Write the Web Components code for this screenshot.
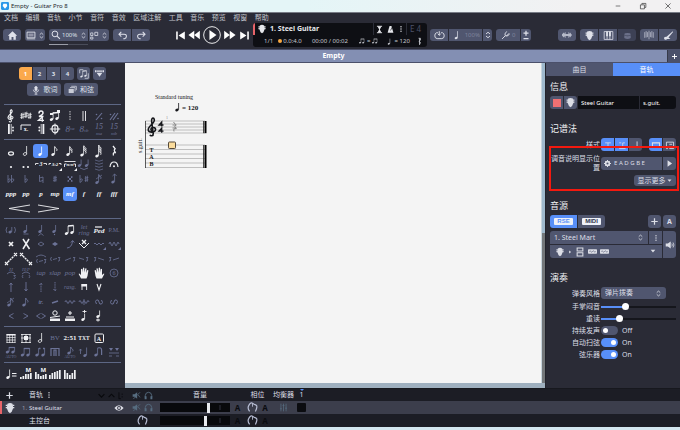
<!DOCTYPE html>
<html lang="zh-CN">
<head>
<meta charset="utf-8">
<title>Empty - Guitar Pro 8</title>
<style>
html,body{margin:0;height:100%}
body{font:6px/8px "Noto Sans","Noto Sans CJK SC",sans-serif;color:#dcdee6;background:#d3e6ef;
--bg:#2a2b36;--btn:#50566f;--blue:#588ff8;--dim:#6c7397;--line:#5d6785;--black:#0e0f14}
</style>
</head>
<body>
<gp-app></gp-app>
<script>
const head=(x,y,o)=>`<ellipse cx="${x}" cy="${y}" rx="1.8" ry="1.3" transform="rotate(-22 ${x} ${y})" ${o?'fill="none" stroke="currentColor" stroke-width=".8"':''}/>`;
const S=(d,w=1,x='')=>`<path d="${d}" fill="none" stroke="currentColor" stroke-width="${w}" ${x}/>`;
const F=d=>`<path d="${d}"/>`;
const T=(t,s=5,st='',y=9)=>`<text x="7" y="${y}" text-anchor="middle" font-family="Liberation Serif,serif" font-size="${s}" ${st}>${t}</text>`;
const IT='font-style="italic"',BI='font-style="italic" font-weight="bold"',B='font-weight="bold"';
const note=(x=6,y=10,h=7,o=0)=>head(x,y,o)+S(`M${x+1.6} ${y-.4}V${y-h}`,.8);
const flag=(x,y)=>S(`M${x} ${y}q.3 1.600 1.700 2.200q1 1 .2 2.200`,.9);
const beam=(y=3)=>note(3.500,10.500,7.500)+note(9,9.500,7)+S(`M5 ${y}L10.600 ${y-.5}`,1.6);
const wave=(y=7,a=1.500)=>S(`M2 ${y}q1-${a*2} 2 0t2 0t2 0t2 0t2 0`,.9);
const clef=S('M5.200 12.200c.3 1.200 2.400 1 2.200-.8L6.300 3C6.100 1 7 .5 7.600.8c.9.9.4 2.600-.8 3.900C5 6.200 3.800 7.300 4 9c.3 1.900 4.700 2 5-.2.2-1.900-3-2.200-3.200-.4 0 .7.3 1 .8 1.200',1.1);
const sharp=(x,y=7)=>S(`M${x-.8} ${y-3}v6M${x+.8} ${y-3.300}v6M${x-1.800} ${y-.8}l3.600-.7M${x-1.800} ${y+1.500}l3.600-.7`,.8);
const flat=x=>S(`M${x} 3v7.500q3-1.800 2.300-3.200q-1-1-2.300.4`,.8);
const bars=(hs)=>hs.map((h,i)=>`<rect x="${1+i*2.500}" y="${12-h}" width="1.700" height="${h}"/>`).join('');
const two='<path d="M5 4.500q0-2.500 2-2.500t2 2q0 1.500-4 3.500h4.500" fill="none" stroke="currentColor" stroke-width="1.500"/>';
const four='<path d="M8.300 12.800V8L4.500 11.300h5.500" fill="none" stroke="currentColor" stroke-width="1.300"/>';
const hand=F('M4 12.500L1.800 8.300q-.3-1 .8-.6L4 9V3.300q.7-.9 1.300 0V6.500L6 2q.7-.8 1.300 0v4.500L8.300 2.500q.7-.7 1.200 0L9.200 7l1-2.800q.8-.6 1.200.2L10.500 10l-1 2.500z');
const ICONS={
 clef,
 keysig:sharp(3.200)+sharp(7,6)+sharp(10.800,7),
 timesig:two+four,
 triplet:beam(4)+F('M9 1h3v3h-3zM2 4h3v2h-3z'),
 dashed:S('M7 2v10',.8,'stroke-dasharray="1.500 1"'),
 dbl:S('M6 2v10M8.500 2v10',.9),
 sim1:S('M4 11L10 4',1.1)+'<circle cx="4.500" cy="5.500" r=".8"/><circle cx="9.500" cy="9.500" r=".8"/>',
 sim2:S('M3 11L8 4M6 11l5-7',1.1)+'<circle cx="3.500" cy="5.500" r=".8"/><circle cx="11" cy="9.500" r=".8"/>',
 repL:F('M4 2h1.800v10H4z')+S('M7.200 2v10',.8)+'<circle cx="9" cy="5.500" r=".9"/><circle cx="9" cy="8.500" r=".9"/>',
 repR:F('M8.500 2h1.800v10H8.500z')+S('M7.200 2v10',.8)+'<circle cx="5.300" cy="5.500" r=".9"/><circle cx="5.300" cy="8.500" r=".9"/>',
 ending:S('M2 8V3h10')+T('x.',6,B,9),
 coda:'<ellipse cx="7" cy="7" rx="3" ry="3.800" fill="none" stroke="currentColor" stroke-width="1.300"/>'+S('M7 1.500v11M1.800 7h10.400'),
 o8va:T('8<tspan font-size="5" dy="-2">va</tspan>',9,IT,10),o8vb:T('8<tspan font-size="5">vb</tspan>',9,IT,10),
 o15a:T('15<tspan font-size="5" x="7" dy="6">ma</tspan>',8,IT,7),o15b:T('15<tspan font-size="5" x="7" dy="6">mb</tspan>',8,IT,7),
 whole:'<ellipse cx="7" cy="9.500" rx="2.500" ry="1.600" fill="none" stroke="currentColor" stroke-width="1.200"/>',
 half:note(6,10,8,1),quarter:note(6,10.500,8),eighth:note(5,10.500,8)+flag(6.800,2.500),
 sixteenth:note(5,10.500,8)+flag(6.800,2.500)+flag(6.800,4.500),
 n32:note(5,11,9)+flag(6.800,1.500)+flag(6.800,3.300)+flag(6.800,5.100),
 n64:note(5,12,11)+flag(6.800,1)+flag(6.800,2.800)+flag(6.800,4.600)+flag(6.800,6.400),
 rest:S('M6 2l2.200 2.800q-2 1.500.5 4q-3.200-1-2.200 2.700',1.300),
 dot:'<circle cx="7" cy="9" r="1.100"/>',ddot:'<circle cx="4.500" cy="9" r="1.100"/><circle cx="9" cy="9" r="1.100"/>',
 trip3:S('M1.500 7V5.500h3M9.500 5.500h3V7',.9)+T('3',6,BI,8),
 tripn:S('M1 7V5.500h2M11 5.500h2V7',.9)+T('3:2',5,BI,8)+F('M11 13h3v-3z'),
 tripb:S('M1.500 3.500h11M1.500 9V6h2M10.500 6h2v3',.9)+T('n:n',5,BI,8)+F('M11 13h3v-3z'),
 tie:note(2.500,7.500,6)+note(9.500,7.500,6)+S('M3 10q4 3 8 0',.8),
 ties:S('M3 2q4 2.500 8 0M3 5q4 2.500 8 0M3 8q4 2.500 8 0M3 11q4 2.500 8 0',.7),
 fermata:S('M3 9q.5-5 4-5t4 5',1.100)+'<circle cx="7" cy="8.300" r="1"/>',
 bb:flat(4)+flat(7.500),b:flat(6),nat:S('M5.500 3v6.500l3.500-1M9 11V5L5.500 6',.8),sh:sharp(7),
 dsh:S('M5 5l4 4M9 5l-4 4')+S('M4.500 5h1.500M8 5h1.500M4.500 9h1.500M8 9h1.500',1.4),bsh:flat(3)+sharp(9.500),
 grace:note(5,10.500,8)+flag(6.800,2.500)+S('M4 7L10 3',.7),up:note(6,10,8)+S('M5.500 4L7.600 2l2 2',.8),
 ppp:T('ppp',7,BI),pp:T('pp',7,BI),p:T('p',7,BI),mp:T('mp',7,BI),mf:T('mf',7,BI),f:T('f',7,BI),ff:T('ff',7,BI),fff:T('fff',7,BI),
 cresc:S('M25 4L4 7.500L25 11',.9),decresc:S('M4 4L25 7.500L4 11',.9),
 ghost:S('M3 4q-2 3 0 6M10.500 4q2 3 0 6',.8)+note(6.200,9,5),
 acc:note(6,8.500,6.500)+S('M4.500 11h5',.8),acc2:note(6,8.500,6.500)+S('M4.500 12.500l2.500-2l2.500 2',.8),stac:note(6,8.500,6.500)+'<circle cx="6.500" cy="11.500" r=".7"/>',
 graceb:beam(3),letring:T('let<tspan x="7" dy="6">ring</tspan>',6.500,IT,6),ped:T('Ped',7,BI,10)+S('M3 4h7',1.2),pm:T('P.M.',6),
 x1:S('M5 5l4 4M9 5l-4 4',1.700),x2:S('M4 2l6.500 10M10 2L4 12',1.500),
 dia:S('M4 7l3-2l3 2l-3 2z',.8),diaf:F('M4 7l3-2l3 2l-3 2z'),bend:S('M4 11q5-.5 5.500-7M7.800 5.500L9.600 3.500l1.700 2',.9),
 trem:S('M2 6l5 5l5-5')+S('M5 3l4 4M9 3L5 7',1.3),vib:wave(7,1)+F('M11 13h3v-3z'),vibw:wave(7,2)+F('M11 13h3v-3z'),
 sl1:S('M4 10L10 4',1.500,'stroke-dasharray="2 .7"')+S('M1 10l3 3M4 10l-3 3M10 1l3 3M13 1l-3 3',1.1),sl2:S('M4 4L10 10',1.500,'stroke-dasharray="2 .7"')+S('M1 1l3 3M4 1L1 4M10 10l3 3M13 10l-3 3',1.1),
 ham:S('M2 5q5-4 10 0M3.500 7q-2 2 0 4M5 9.500l4-1M10 7.500h2L11 9q1.500 1 0 2h-1',.8),s1:S('M3.500 5q-2 2 0 4M5 7.500l4-1M10 5.500h2L11 7q1.500 1 0 2h-1',.8),s2:S('M2 8.500L8 6M10 5.500h2L11 7q1.500 1 0 2h-1',.8),s3:S('M2 6l5 1.500M9 5.500h2L10 7q1.500 1 0 2h-1',.8),s4:S('M2 5.500h2L3 7q1.500 1 0 2H2M6 6l6 2',.8),s5:S('M2 5.500h2L3 7q1.500 1 0 2H2M6 8l6-2',.8),
 hp:T('H',5,IT,5)+S('M3 8q4-4 8 0M9.500 9.500h2l-1 1.200q1.500 1 0 2h-1',.8),hpp:T('H/P',5,IT,5)+S('M3 8q4-4 8 0M4 12q-1.500-1.500 0-3M10 12q1.500-1.500 0-3',.8),
 tap:T('tap',7,IT),slap:T('slap',7,IT),pop:T('pop',7,IT),hand,hand2:`<g transform="matrix(-1 0 0 1 14 0)">${hand}</g>`,
 six:'<circle cx="7" cy="7" r="4" fill="none" stroke="currentColor" stroke-width=".8"/>'+T('6',6),
 au:S('M7 12V3M5.500 5L7 3l1.500 2',.9),ad:S('M7 2v9M5.500 9L7 11l1.500-2',.9),dau:S('M7 12V3M5.500 5L7 3l1.500 2',.9,'stroke-dasharray="1.500 .7"'),dad:S('M7 2v9M5.500 9L7 11l1.500-2',.9,'stroke-dasharray="1.500 .7"'),
 rasg:T('rasg.',6,IT),down:F('M4.500 4h5.500v2.500h-5.500z')+S('M5 10V4M9.600 10V4',.9),vup:S('M5 4l2 6l2-6',1.100),
 g1:note(5,10,7)+flag(6.800,3)+S('M3 8l7-5',.7),g2:note(5,10,7)+flag(6.800,3),tr:T('tr.',6,BI),pick:S('M4 8l6-2',1.500),
 mord:wave(7,1.600),mord2:wave(7,1.600)+S('M7 4v6',.8),turn:S('M4.500 9q-2-3 0-4t2.500 2t2.500 2t0-4',1),turn2:S('M4.500 5q-2 3 0 4t2.500-2t2.500-2t0 4',1),
 lt:S('M9.500 4.500L5 7l4.500 2.500',.9),gt:S('M4.500 4.500L9 7l-4.500 2.500',.9),ltgt:S('M6.500 4.500L2.500 7l4 2.500M7.500 4.500L11.500 7l-4 2.500',.9),
 wopen:'<circle cx="7" cy="4" r="2.200" fill="none" stroke="currentColor"/>'+S('M2 8.500L12 7',1)+F('M2 9.500h10V12H2z'),
 wclose:S('M7 2v4M5 4h4M3 8h8',1.1)+F('M2 9.500h10V12H2z'),
 nq1:note(6,10.500,6)+S('M5.500 2.500h4M7.500 1v3',.9),nq2:note(6,7.500,6)+S('M4 11h4M6 9.500v3',1),
 chords:F('M2.500 3h9v1.500h-9z')+S('M3 3v9M5.700 3v9M8.400 3v9M11 3v9M2.500 6.500h9M2.500 9h9M2.500 11.500h9',.7),
 diag:S('M3 3v9M7 3v9M11 3v9M2 3.500h10M2 7h10M2 11.500h10',.8)+F('M5 5h4v4H5z'),
 bv:T('BV',7),t251:T('2:51',7,B),txt:T('TXT',5.500,B),boxA:'<rect x="3" y="3" width="8.500" height="8.500" rx="1" fill="none" stroke="currentColor"/>'+T('A',6,B,9.500),
 auto:note(3.500,7,5)+note(9,7,5)+S('M5 2.500h5.700',1.200)+T('AUTO',4,'',12.500),bm:note(3.500,10,7)+note(9,10,7)+S('M5 3.500h5.700',1.300),
 bm2:note(3,10,7)+note(9,10,7)+S('M5 3.500h1.500M9 3.500h1.700',1.300),bm3:S('M3 11V3.500h8V11M6 11V5h2v6',1.200),auto2:note(6,8,6)+flag(7.800,2)+T('AUTO',4,'',12.500),
 stemu:note(8,10.500,8)+S('M3.500 9V4M2.300 5.500L3.500 4l1.200 1.500',.8),stemd:note(4,10,7)+S('M5.600 3q4-1 4 2v5',1.2),
 brk:S('M2 8h10M2 11h3M9 11h3',.8)+F('M2 3h4L4 6zM8 3h4l-2 3z'),
 tempo:note(4,10.500,8)+S('M8 6.500h4.500M8 9h4.500',1),
 volM:bars([2,3,5,5,6])+`<text x="6.500" y="5" font-size="6" font-weight="bold" font-family="Noto Sans,sans-serif">M</text>`,vol:bars([4,6,7,8,9]),pan:bars([9,6,4,6,9]),
 panM:bars([7,5,3,4,5])+`<text x="6.500" y="5" font-size="6" font-weight="bold" font-family="Noto Sans,sans-serif">M</text>`,
 guitar:F('M4 2q3-1.600 6 0l.8 5L9 11.500L7 13L5 11.500L3.200 7z')+S('M2 4h2M2 6.500h2M10 4h2M10 6.500h2',1.500),
 home:F('M7 1.500L13 7.300h-1.800v5H8.200V9H5.800v3.300H2.800v-5H1z'),
 screen:S('M1.500 3h11v8h-11z',1.300)+'<path d="M3.500 5h7v4h-7z" opacity=".45"/>'+S('M1 12.500h12',1),
 spin:S('M3.500 5.200l3.500-3L10.500 5.200M3.500 8.800l3.500 3L10.500 8.800',1.600),
 zoom:'<circle cx="5.500" cy="5.500" r="4" fill="none" stroke="currentColor" stroke-width="1.400"/>'+S('M8.500 8.500l4 4',1.600),
 grid:S('M1 3h3.500v4H1zM7.500 2H12v5H7.500zM1 9.500h3.500v3H1z',1.200),
 undo:S('M5.500 2.500L2.500 5.500l3 3M2.500 5.500H9q3 0 3 2.500T9.500 11H8',1.300),redo:S('M8.500 2.500L11.500 5.500l-3 3M11.500 5.500H5Q2 5.500 2 8t2.500 3H6',1.300),
 first:F('M1.500 2h2v10h-2zM12.500 2v10L4.500 7z'),last:F('M10.500 2h2v10h-2zM1.500 2v10L9.500 7z'),
 rew:F('M7.300 2v10L.5 7zM13.800 2v10L7.300 7z'),fwd:F('M6.700 2v10L13.500 7zM.2 2v10L6.700 7z'),
 play:'<circle cx="7" cy="7" r="6.500" fill="none" stroke="currentColor" stroke-width=".7"/>'+F('M5 3.200v7.600L10.500 7z'),tri:F('M4 2v10L11 7z'),
 hour:S('M3 2h8M3 12h8',1.400)+F('M4 2.500h6L7.500 7L10 11.500H4L6.500 7z'),metro:F('M5.500 1.500h3L11.500 12h-9z')+'<path d="M7 8.500L10.500 2" stroke="#0e0f14"/>',
 dots:'<circle cx="7" cy="3" r="1.200"/><circle cx="7" cy="7" r="1.200"/><circle cx="7" cy="11" r="1.200"/>',
 loop:S('M5 3.500H3q-2 1-2 4t3 3.500h6q3-.5 3-3.500T11 3.500H9M6.700 1.500v5M5 5L6.700 6.800L8.500 5',1.200),
 fork:S('M1.500 12.500L6 8M6 8Q4 6 8 2M6 8q2 2 6-2M7.500 8.500l4-4',1.300),
 plusminus:S('M3.500 4.500h7M7 1v7M3.500 12h7',1.800),wavef:F('M0 6l3-3v2.500l2-3v3h4v-3l2 3V3l3 4l-3 4V8.500l-2 3v-3H5v3l-2-3V11L0 8z'),
 piano:S('M1.500 2h11v10h-11zM5.200 2v10M8.800 2v10',1)+F('M4 2h2.300v6H4zM7.700 2H10v6H7.700z'),
 drum:'<ellipse cx="7" cy="5" rx="5" ry="2"/><path d="M2 6.500q5 3 10 0V11q-5 3-10 0z"/>',
 strings:S('M1 3v8M3 1.500v9M5 3v7M7 1v12M9 3v7M11 1.500v9M13 3v8',1.100),
 jack:F('M12.500 1.500L4.500 8.500L2 9q-1.500 2 0 3q2 1 3.500-.5h4L7 9.500l5.800-7z'),
 plus:S('M7 2v10M2 7h10',1.900),caret:F('M3 5h8L7 9.500z'),mic:F('M5 3q2-3.500 4 0v4q-2 2.500-4 0z')+S('M3.300 6.500q0 3.500 3.700 3.500t3.700-3.500M7 10v3M5 12.800h4',1.100),
 books:'<g opacity=".85">'+S('M5 2h8v6',1.300)+S('M3 4h8v6',1.300)+F('M1 6h8v6.500H1z')+'</g>',eyeball:F('M.5 7Q7-1 13.500 7Q7 15 .5 7z')+'<circle cx="7" cy="7" r="2.700" fill="#3c3e4c"/><circle cx="7" cy="7" r="1.400"/>',
 pages:beam(3)+S('M1 6V1h5M13 6v7H8',1),filter:F('M0 2h2v3H0zM12 2h2v3h-2zM2.500 2.500h9v1.800h-9zM2.500 6h9L7 12z'),
 speaker:F('M1 5h3L8 2v10L4 9H1z')+S('M9.500 5q1.500 2 0 4M11.300 3.500q2.500 3.500 0 7',1.100),mute:F('M1 5h3L8 2v10L4 9H1z')+S('M2 12.500L12.500 2M9.500 6l3 4',1.200),
 phones:S('M2 10V7q.5-5 5-5t5 5v3',1.400)+F('M1 8h3v5H1zM10 8h3v5h-3z'),gear:'<circle cx="7" cy="7" r="3.700" fill="none" stroke="currentColor" stroke-width="3.200"/>'+S('M7 0v2M7 12v2M0 7h2M12 7h2M2 2l1.500 1.500M10.500 10.500L12 12M12 2l-1.500 1.500M3.500 10.500L2 12',2),
 knob:S('M3.300 12Q0 8 2.500 4T7 1.500T11.500 4T10.700 12',1.500)+S('M7 1.500V6',1.100),
 chd:S('M2.500 5l4.500 4.500l4.500-4.500',1.800),chu:S('M2.500 9.500L7 5l4.500 4.500',1.800),eq:S('M3 1v12M7 1v12M11 1v12M1.500 9h3M5.500 4h3M9.500 8h3',1.200),
 amp:S('M3 1.500h8v4H3zM3 8h8v4.500H3z',1.500),
 pedal:'<rect x="0" y="3.500" width="14" height="7" rx="1"/><path d="M2 7q1.200-2 2.500 0t2.500 0t2.500 0t2.500 0" fill="none" stroke="#50566f"/>',
 min:S('M3 7h8',1.100),restore:S('M2.500 5h7v7h-7zM5 4.500V2.500h7v7h-2',1.200),close:S('M2.500 2.500l9 9M11.500 2.500l-9 9',1.200),
 logo:'<rect width="14" height="14" rx="2" fill="#2898e8"/><path d="M4 3h6l1 4l-4 5l-4-5z" fill="#fff"/>',
 st1:S('M3 4h8M3 10h8M7 4v6',1.100),st2:S('M6 9.500H3M11 4H8v6M3 4h3M3 12h9',1.100),st3:S('M8.500 2v8H6',1.200),st4:S('M2 10V4h10v6',1.500),st5:S('M2 3h10v9H6M2 3v9h2M6 6h4M6 9h4',1.200),
 forte:S('M5.500 2h3v3L6 7l2.500 1.500L7 12M7 2v10',1.300),bracket:S('M3 2v10h3M8 4v2M8 8v2',1.3)
};
const define=(name,css,html)=>customElements.define(name,class extends HTMLElement{
 constructor(){super();this.attachShadow({mode:'open'})}
 connectedCallback(){
  const t=document.createElement('template');
  t.innerHTML=`<style>:host{display:block;box-sizing:border-box}*{box-sizing:border-box}button,input,select{font:inherit;color:inherit;border:0;margin:0;padding:0;background:none;appearance:none;min-width:0;outline:0}button{display:flex;align-items:center;justify-content:center}gp-group>*{background:var(--btn)}${css}</style>${typeof html==='function'?html(this):html}`;
  this.shadowRoot.replaceChildren(t.content.cloneNode(true));
 }});
const I=(n,s=10,extra='')=>`<gp-icon name="${n}" size="${s}" ${extra}></gp-icon>`;

define('gp-icon',`:host{display:inline-flex;flex:none}svg{display:block;overflow:visible}`,e=>{
 const s=+e.getAttribute('size')||14,w=+e.getAttribute('wide')||1;
 return `<svg width="${s*w}" height="${s}" viewBox="0 0 ${14*w} 14" fill="currentColor" aria-hidden="true">${ICONS[e.getAttribute('name')]||''}</svg>`});

define('gp-titlebar',`:host{display:flex;align-items:center;height:13px;background:linear-gradient(90deg,#e4f5f7 45%,#f2f1f2 85%);color:#22252b;border-bottom:1px solid #777b85;padding:0 8px 0 1px;gap:2px}
.w{margin-left:auto;display:flex;gap:17px;color:#333}`,
`${I('logo',8)}<span><slot></slot></span><span class="w"><button aria-label="最小化">${I('min',8)}</button><button aria-label="还原">${I('restore',8)}</button><button aria-label="关闭">${I('close',8)}</button></span>`);

define('gp-menubar',`:host{background:var(--bg);height:10px;font-size:7px;color:#c3c5cc}nav{display:flex;justify-content:space-between;width:269px;max-width:100%;padding-left:4px}button{line-height:9px}`,
`<nav>${'文档 编辑 音轨 小节 音符 音效 区域注解 工具 音乐 预览 视窗 帮助'.split(' ').map(x=>`<button>${x}</button>`).join('')}</nav>`);

define('gp-group',`:host{display:inline-flex;gap:1px;height:12px;border-radius:3px;overflow:hidden;flex:none;color:#dfe1ea}`,`<slot></slot>`);

define('gp-lcd',`:host{background:var(--black);border-radius:3px;height:24px;overflow:hidden;color:#e6e7eb}
div{display:flex;align-items:center;height:12px}.a{border-left:2px solid #e86469;gap:3px;padding-left:2px}
b{font-size:7px;flex:1}.i{display:flex;gap:2px;border:solid #2c2e38;border-width:0 1px;height:12px;align-items:center;padding:0 1px}.n{color:#4c5268;font-size:8px;width:17px;white-space:nowrap}
.b{justify-content:space-between;padding:0 3px 0 11px;color:#c5c7cd}.d{display:flex;align-items:center;gap:1px}.d i{width:4px;height:4px;border-radius:50%;background:#f8a840}.t{margin:0 5px}`,
`<div class="a">${I('guitar',10)}<b>1. Steel Guitar</b><span class="i">${I('hour',9)}${I('metro',9)}${I('dots',8)}</span><span class="n">E 4</span></div>
<div class="b"><span>1/1</span><span class="d"><i></i>0.0:4.0</span><span class="t">00:00 / 00:02</span><span class="d">${I('bm',8)}=${I('bm',8)}</span><span class="d">${I('quarter',9)}= 120</span>${I('forte',9)}</div>`);

define('gp-toolbar',`:host{display:grid;grid-template-columns:1fr 174px 1fr;height:26px;background:var(--bg);padding-bottom:2px}
.l,.r{display:flex;align-items:center;gap:4px;padding:0 3px}.t{display:flex;align-items:center;gap:3px;margin-left:auto;color:#fff;padding-right:1px}
.r>.s{flex:1}button{width:18px;height:12px}.m{gap:2px}label{display:flex;align-items:center;gap:1px;padding:0 1px 0 2px}select{width:17px;height:12px}.z{display:grid;position:relative}.bar{position:absolute;top:15px;left:0;width:39px;height:1px;background:linear-gradient(90deg,#9a9da8 50%,#494c59 50%)}
.q{color:#7f859d}.off{color:#6b7089;background:#3d4155}`,
`<div class="l"><gp-group><button aria-label="主页">${I('home',11)}</button></gp-group><gp-group><button style="width:20px" class="m" aria-label="布局">${I('screen',10)}${I('spin',7)}</button></gp-group>
<span class="z"><gp-group><label>${I('zoom',10)}<select aria-label="缩放"><option>100%</option></select>${I('spin',7)}</label><button style="width:20px" class="m" aria-label="页面">${I('grid',9)}${I('spin',7)}</button></gp-group><i class="bar"></i></span>
<gp-group><button aria-label="撤销">${I('undo',11)}</button><button aria-label="重做">${I('redo',11)}</button></gp-group>
<span class="t"><button style="width:10px" aria-label="开头">${I('first',11)}</button><button style="width:12px" aria-label="后退">${I('rew',12)}</button><button aria-label="播放">${I('play',18)}</button><button style="width:12px" aria-label="前进">${I('fwd',12)}</button><button style="width:10px" aria-label="结尾">${I('last',11)}</button></span></div>
<gp-lcd></gp-lcd>
<div class="r"><gp-group><button aria-label="循环">${I('loop',11)}</button><button style="width:33px" aria-label="速度">${I('quarter',12)}&nbsp;<span class="q">100%</span></button><button style="width:9px" aria-label="调整速度">${I('spin',8)}</button></gp-group>
<gp-group><button style="width:24px" aria-label="移调">${I('fork',10)}&nbsp; <span class="q">0</span></button><button style="width:10px" aria-label="增减">${I('plusminus',10)}</button></gp-group><span class="s"></span>
<gp-group><button aria-label="波形" style="color:#b5b9c8">${I('wavef',10)}</button></gp-group><gp-group><button aria-label="指板">${I('guitar',11)}</button><button aria-label="键盘">${I('piano',11)}</button><button class="off" aria-label="鼓">${I('drum',9)}</button></gp-group><gp-group><button aria-label="调音" style="color:#b5b9c8">${I('strings',10)}</button><button aria-label="输入">${I('jack',11)}</button></gp-group></div>`);

define('gp-tabbar',`:host{display:flex;height:14px;background:#838fb3;border:solid #4b506a;border-width:1px 0;font-size:7px;color:#fff}
.t{flex:1;font-weight:bold}.p{width:13px;background:#4b516a;border-left:1px solid #363a4a}`,`<button class="t"><slot></slot></button><button class="p" aria-label="新标签">${I('plus',7)}</button>`);

const SECT=[
[35,'clef keysig timesig triplet dashed dbl -sim1 -sim2 repL ending repR coda -o8va -o8vb -o15a -o15b'],
[79,'whole half *quarter eighth sixteenth n32 n64 rest dot ddot trip3 tripn tripb -tie -ties fermata -bb -b -nat -sh -dsh -bsh -grace -up ppp pp p mp *mf f ff fff cresc decresc'],
[108,'-ghost -acc -acc2 -stac graceb -letring ped -pm x1 x2 -dia -diaf -bend trem -vib -vibw sl1 sl2 -ham -s1 -s2 -s3 -s4 -s5 -hp -hpp -tap -slap -pop hand hand2 -six -au -ad -dau -dad -rasg down vup . -g1 -g2 -tr -pick -mord -mord2 -turn -turn2 -lt -gt -ltgt wopen wclose nq1 nq2'],
[36,'chords diag half -bv t251 txt boxA . -auto -bm -bm2 -bm3 -auto2 -stemu -stemd -brk'],
[22,'tempo volM panM vol pan']];
define('gp-palette',`:host{display:flex;flex-direction:column;width:125px;background:var(--bg);padding:4px}
.h{flex:37 37 37px;display:flex;flex-direction:column;align-items:center;gap:3px;min-height:0}.h div{display:flex;gap:3px;align-items:center}
.h gp-group{height:13px}.n button{width:13px;font-weight:bold}.h .on{background:#fba94c;color:#fff}.w button{width:34px;gap:3px;font-size:7px}
section{display:grid;grid-template-columns:repeat(8,1fr);grid-auto-rows:1fr;border-top:1px solid var(--line);padding:4px 0 3px;min-height:0}
section button{border-radius:3px;color:#f0f1f4;min-height:0;height:100%}section .d{color:var(--dim)}section .s{background:var(--blue);color:#fff}section .x{grid-column:span 2}`,
`<div class="h"><div class="n"><gp-group><button class="on">1</button><button>2</button><button>3</button><button>4</button></gp-group><gp-group><button aria-label="多声部">${I('pages',10)}</button></gp-group><gp-group><button aria-label="筛选">${I('filter',9)}</button></gp-group></div>
<div class="w"><gp-group><button>${I('mic',10)}歌词</button></gp-group><gp-group><button>${I('books',9)}和弦</button></gp-group></div></div>`+
SECT.map(([h,s])=>`<section style="flex:${h} ${h} ${h}px">${s.split(' ').map(k=>{if(k==='.')return'<span></span>';const d=k[0]==='-',a=k[0]==='*',n=k.replace(/^[-*]/,''),x=/cresc/.test(n);return`<button class="${d?'d ':''}${a?'s ':''}${x?'x':''}" aria-label="${n}">${I(n,14,x?'wide="2"':'')}</button>`}).join('')}</section>`).join(''));

const line=(x1,y1,x2,y2,c='#8a8a8a',w=.5)=>`<path d="M${x1} ${y1}L${x2} ${y2}" stroke="${c}" stroke-width="${w}"/>`;
define('gp-score',`:host{display:grid;grid-template-columns:1fr 4px;grid-template-rows:1fr 5px;background:#f4f4f4;flex:1;min-width:0}
.p{padding:28px 8px;color:#16171b}.v{background:linear-gradient(#9fb9cd 53%,#73777a 53%);border-left:1px solid #c8d5de}.b{grid-column:1/-1;background:#9fb0bf}svg{display:block}text{font-family:"Liberation Serif",serif}`,
`<div class="p"><svg width="80" height="84" viewBox="0 0 80 84" fill="currentColor">
<text x="41" y="8" font-size="6" text-anchor="middle">Standard tuning</text>
<g transform="translate(38 10)">${note(6,9,7)}</g><text x="49" y="19" font-size="7" font-weight="bold">= 120</text>
<text x="33" y="28" font-size="4" fill="#888">1</text>
${[30,33,36,39,42].map(y=>line(12,y,72,y)).join('')}${[54,58.500,63,67.500,72,76.500].map(y=>line(12,y,72,y)).join('')}
${line(12.500,30,12.500,77,'#333',.8)}${[[30,42.200],[54,77]].map(([a,b])=>line(70.500,a,70.500,b,'#222',.8)+line(72.500,a,72.500,b,'#000',2)).join('')}
<g transform="translate(9.500 26) scale(1.450)">${clef}</g>
${[0,6.200].map(d=>`<path d="M28.700 ${35.500+d}V${31+d}L26 ${34+d}H30.500" fill="none" stroke="currentColor" stroke-width="1.300"/>`).join('')}
<g color="#888" transform="translate(34.500 29)">${S('M6 2l2.200 2.800q-2 1.500.5 4q-3.200-1-2.200 2.700M5 5h4M5 8h4',1)}</g>
<g font-size="6" font-weight="bold" text-anchor="middle"><text x="18.500" y="61">T</text><text x="18.500" y="68">A</text><text x="18.500" y="75">B</text></g>
<text transform="translate(9 62) rotate(-90)" font-size="6">s.guit.</text>
<rect x="35.500" y="51" width="7" height="6.500" rx=".8" fill="#fbdc9c" stroke="#54493a"/></svg></div><div class="v"></div><div class="b"></div>`);

define('gp-slider',`:host{width:75px}input{display:block;width:100%;height:8px;background:linear-gradient(90deg,var(--blue) var(--v),#15161c var(--v)) center/100% 2px no-repeat}
input::-webkit-slider-thumb{appearance:none;width:7px;height:7px;border-radius:50%;background:#fff}`,e=>`<input type="range" aria-label="${e.getAttribute('label')}" value="${e.getAttribute('value')}" style="--v:${e.getAttribute('value')}%">`);
define('gp-switch',`:host{display:flex}label{display:flex;align-items:center;gap:4px}input{width:17px;height:9px;border-radius:5px;background:#50566f;display:flex;align-items:center;padding:0 2px}
input::before{content:"";width:5px;height:5px;border-radius:50%;background:#fff}input:checked{background:var(--blue);justify-content:flex-end}`,e=>`<label><input type="checkbox" aria-label="${e.getAttribute('label')}" ${e.hasAttribute('on')?'checked':''}>${e.hasAttribute('on')?'On':'Off'}</label>`);

define('gp-inspector',`:host{width:135px;background:var(--bg);position:relative;font-size:7px;border-left:1px solid #22232c}
.tabs{display:grid;grid-template-columns:1fr 1fr;height:13px}.tabs button{background:#50566f}.tabs .on{background:var(--blue);color:#fff}
.c{padding:5px 4px}h2{font-size:9px;line-height:12px;font-weight:400;margin:0;color:#f0f1f4}.r{display:flex;align-items:center;gap:1px}
.sq{width:13px;height:13px;background:var(--btn)}.sq i{width:8px;height:8px;background:#ef7073}.in{height:13px;background:var(--black);padding:0 3px;font-size:6px;color:#fff}
.f{display:grid;grid-template-columns:50px 1fr;column-gap:1px;align-items:center}.f>label,.f>span{text-align:right;line-height:9px}
.g{display:flex;gap:1px;border-radius:3px;overflow:hidden}.g>*{background:var(--btn)}.g>.on{background:var(--blue)}
.tag{font-size:6px;line-height:7px;font-weight:bold;font-family:"Liberation Sans",sans-serif;background:#eef1f8;padding:0 3px;border-radius:1px}
.src{display:grid;grid-template-columns:1fr 13px 13px;gap:1px;border-radius:3px;overflow:hidden;grid-template-rows:13px 13px;margin-top:3px}.src>*{background:var(--btn)}
.sel{display:flex;align-items:center;background:var(--btn);padding:0 4px}.sel select{flex:1;height:12px}
.mark{position:absolute;left:3px;right:1px;top:83px;height:45px;border:2px solid #f3190f;pointer-events:none}`,
`<div class="tabs"><button>曲目</button><button class="on">音轨</button></div>
<div class="c"><h2>信息</h2>
<div class="r" style="margin-top:3px"><div class="g"><button class="sq" aria-label="颜色"><i></i></button><button class="sq" aria-label="乐器">${I('guitar',11)}</button></div><input class="in" style="flex:2;width:0" aria-label="名称" value="Steel Guitar"><input class="in" style="width:36px;border-radius:0 3px 3px 0" aria-label="简称" value="s.guit."></div>
<h2 style="margin-top:14px">记谱法</h2>
<div class="f" style="margin-top:3px"><span>样式</span><div class="r" style="justify-content:space-between"><div class="g"><button class="sq on" aria-label="五线谱">${I('st1',10)}</button><button class="sq on" aria-label="六线谱">${I('st2',10)}</button><button class="sq" aria-label="斜线">${I('st3',10)}</button></div><div class="g"><button class="sq on" aria-label="横向">${I('st4',10)}</button><button class="sq" aria-label="纵向">${I('st5',10)}</button></div></div></div>
<div class="f" style="margin-top:3px"><span>调音说明显示位置</span><div class="g" style="height:13px"><button style="flex:1;justify-content:flex-start;gap:3px;padding-left:3px;font-size:6px">${I('gear',7)}E A D G B E</button><button class="sq" aria-label="试听">${I('tri',9)}</button></div></div>
<div class="r" style="justify-content:flex-end;margin-top:3px"><div class="g"><button style="height:11px;width:42px">显示更多${I('caret',7)}</button></div></div>
<h2 style="margin-top:14px">音源</h2>
<div class="r" style="margin-top:3px;gap:2px"><div class="g" style="height:13px;margin-right:auto"><button class="on" style="width:27px"><span class="tag" style="color:#588ff8">RSE</span></button><button style="width:27px"><span class="tag" style="color:#30354a">MIDI</span></button></div><div class="g"><button class="sq" aria-label="添加">${I('plus',9)}</button></div><div class="g"><button class="sq"><b>A</b></button></div></div>
<div class="src"><div class="sel"><select aria-label="音源"><option>1. Steel Mart</option></select>${I('spin',7)}</div><button aria-label="更多">${I('dots',8)}</button><button style="grid-row:span 2" aria-label="音量">${I('speaker',10)}</button>
<button style="grid-column:span 2;justify-content:flex-start;padding:0 5px;gap:3px" aria-label="效果链">${I('guitar',10)}${I('tri',4)}${I('amp',10)}${I('pedal',9)}${I('pedal',9)}<span style="margin-left:auto">${I('caret',8)}</span></button></div>
<h2 style="margin-top:14px">演奏</h2>
<div class="f" style="row-gap:3px;margin-top:3px"><label for="st">弹奏风格</label><div class="sel" style="width:65px;border-radius:3px"><select id="st"><option>弹片拨奏</option></select>${I('spin',7)}</div>
<span>手掌闷音</span><gp-slider label="手掌闷音" value="31"></gp-slider><span>重读</span><gp-slider label="重读" value="22"></gp-slider>
<span>持续发声</span><gp-switch label="持续发声"></gp-switch><span>自动扫弦</span><gp-switch label="自动扫弦" on></gp-switch><span>弦乐器</span><gp-switch label="弦乐器" on></gp-switch></div></div>
<div class="mark"></div>`);

define('gp-mixer',`:host{background:#1c1d25;border-top:1px solid #17181e}
.r{display:grid;grid-template-columns:18px 108px 32px 84px 31px 21px 15px 1fr;height:13px;align-items:center}.r>*{display:flex;align-items:center;justify-content:center}
.h{font-size:7px;height:12px}.r>.n{justify-content:flex-start;padding-left:4px;gap:2px}.t{background:#3c3e4c}.t .g{border-left:2px solid #e86469;height:13px}.k{color:#08090c;display:flex;gap:1px}.sp{margin-left:auto}
.q{gap:3px;color:#566c80}input{width:70px;height:9px;background:linear-gradient(90deg,transparent 84%,#1c1d25 84%,#1c1d25 87%,transparent 87%),#08090c;background-size:100% 5px;background-repeat:no-repeat;background-position:center}input::-webkit-slider-thumb{appearance:none;width:3px;height:10px;background:#e8eaee}
.v{gap:5px;font-size:8px;font-weight:bold;color:#0b0c10}.p{gap:4px;font-size:8px;font-weight:bold;color:#0b0c10}.p gp-icon{color:#b9bfd5}.c i{width:9px;height:9px;background:#0b0c10;border-radius:1px}.one{position:relative}.one::before{content:"";position:absolute;top:-2px;border:2px solid transparent;border-top-color:var(--blue);border-bottom:0}`,
`<div class="r h"><button aria-label="添加音轨">${I('plus',9)}</button><div class="n" style="padding-left:11px">音轨 ${I('dots',8)}<span class="sp k">${I('chd',9)}${I('chu',9)}${I('bracket',9)}</span></div><div class="q">${I('mute',9)}${I('phones',9)}</div><span>音量</span><span>相位</span><span>均衡器</span><span class="one">1</span></div>
<div class="r t"><span class="g">${I('guitar',12)}</span><div class="n"><span style="color:#9a9da8">1.</span>Steel Guitar<button class="sp" aria-label="可见" style="margin-right:2px">${I('eyeball',10)}</button></div><div class="q">${I('mute',9)}${I('phones',9)}</div><div class="v"><input type="range" aria-label="音轨音量" value="70"><span>A</span></div><div class="p">${I('knob',11)}<span>A</span></div><span style="color:#566c80">${I('eq',9)}</span><span class="c"><i></i></span></div>
<div class="r"><span></span><div class="n" style="padding-left:11px;font-size:7px">主控台</div><div class="q" style="color:#b9bfd5">${I('knob',11)}</div><div class="v"><input type="range" aria-label="主音量" value="66"><span>A</span></div><div class="p">${I('knob',11)}<span>A</span></div></div>`);

define('gp-app',`:host{display:flex;flex-direction:column;height:100vh;padding-bottom:3px}.m{flex:1;display:flex;min-height:0}`,
`<gp-titlebar>Empty - Guitar Pro 8</gp-titlebar><gp-menubar></gp-menubar><gp-toolbar></gp-toolbar><gp-tabbar>Empty</gp-tabbar>
<div class="m"><gp-palette></gp-palette><gp-score></gp-score><gp-inspector></gp-inspector></div><gp-mixer></gp-mixer>`);
</script>
</body>
</html>
